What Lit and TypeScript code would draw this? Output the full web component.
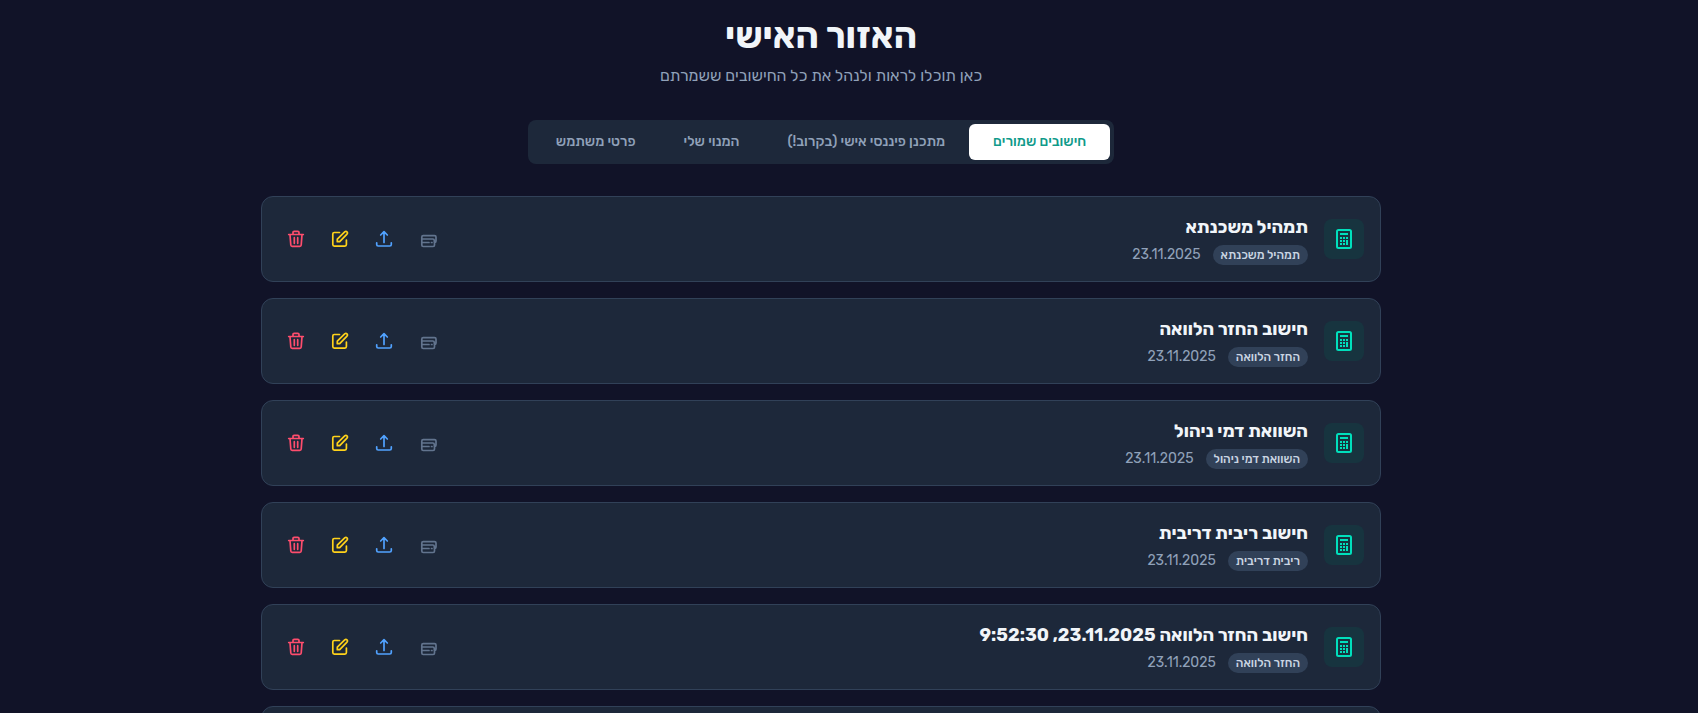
import { LitElement, html, css, svg } from "lit";
import { customElement, property, state } from "lit/decorators.js";

interface SavedCalculation {
  title: string;
  kind: string;
  date: string;
}

const CALCULATIONS: SavedCalculation[] = [
  { title: "תמהיל משכנתא", kind: "תמהיל משכנתא", date: "23.11.2025" },
  { title: "חישוב החזר הלוואה", kind: "החזר הלוואה", date: "23.11.2025" },
  { title: "השוואת דמי ניהול", kind: "השוואת דמי ניהול", date: "23.11.2025" },
  { title: "חישוב ריבית דריבית", kind: "ריבית דריבית", date: "23.11.2025" },
  { title: "חישוב החזר הלוואה 23.11.2025, 9:52:30", kind: "החזר הלוואה", date: "23.11.2025" },
  { title: "תמהיל משכנתא", kind: "תמהיל משכנתא", date: "23.11.2025" },
];

const TABS = ["חישובים שמורים", "מתכנן פיננסי אישי (בקרוב!)", "המנוי שלי", "פרטי משתמש"];

const calculatorIcon = svg`
  <rect x="3" y="1" width="14" height="18" rx="1.5" stroke-width="2"/>
  <path d="M6 5h8" stroke-width="2" stroke-linecap="butt"/>
  <g fill="currentColor" stroke="none">
    <rect x="6" y="8" width="2" height="2"/><rect x="9" y="8" width="2" height="2"/><rect x="12" y="8" width="2" height="2"/>
    <rect x="6" y="11" width="2" height="2"/><rect x="9" y="11" width="2" height="2"/><rect x="12" y="11" width="2" height="5"/>
    <rect x="6" y="14" width="2" height="2"/><rect x="9" y="14" width="2" height="2"/>
  </g>`;

const cardsIcon = svg`
  <path d="M16.500 13.500v2.600q0 1.400-1.400 1.400H5.200q-1.400 0-1.400-1.400V8.100q0-1.400 1.400-1.400h11.300q1.500 0 1.500 1.400v4q0 1.600-1.500 1.600M4 10h10.800q1.500 0 1.500 1.500v1.500M4 13.500h7M13.500 13.500h.5"/>`;

const uploadIcon = svg`
  <path d="M10 13.500V3M6.700 6 10 2.700 13.300 6M2.700 13.800v1.700q0 1.500 1.500 1.500h11.600q1.500 0 1.500-1.500v-1.700"/>`;

const editIcon = svg`
  <path d="M9.500 3.500H4.300q-1.500 0-1.500 1.500v10.600q0 1.500 1.500 1.500h10.600q1.500 0 1.500-1.500V11"/>
  <path d="M7.300 12.700v-2.500l7.400-7.300q1.200-1 2.300 0 1.100 1.200 0 2.300l-7.300 7.500z"/>`;

const trashIcon = svg`
  <path d="M2.700 5.500h14.600M7 5.300V3.600q0-1.200 1.200-1.200h3.600q1.200 0 1.200 1.200v1.700M4 5.700l.8 10.300q.1 1.300 1.400 1.300h7.600q1.300 0 1.400-1.300L16 5.700M8.300 8.700v5.600M11.700 8.700v5.600"/>`;

const icon = (shape: unknown) => html`
  <svg viewBox="0 0 20 20" width="20" height="20" fill="none" stroke="currentColor"
    stroke-width="1.7" stroke-linecap="round" stroke-linejoin="round" aria-hidden="true">${shape}</svg>`;

@customElement("calculation-card")
export class CalculationCard extends LitElement {
  @property({ attribute: false }) item!: SavedCalculation;

  static styles = css`
    :host {
      display: block;
    }
    .card {
      display: flex;
      align-items: center;
      gap: 16px;
      padding: 16px;
      border: 1px solid #314158;
      border-radius: 12px;
      background: #1d283a;
    }
    svg {
      display: block;
    }
    .badge-icon {
      display: grid;
      place-items: center;
      width: 40px;
      height: 40px;
      border-radius: 8px;
      background: #17343f;
      color: #00e0bc;
    }
    .info {
      flex: 1;
      min-width: 0;
    }
    .title {
      margin: 0 0 4px;
      font-size: 18px;
      line-height: 28px;
      font-weight: 700;
      color: #f1f5f9;
    }
    .meta {
      display: flex;
      align-items: center;
      gap: 12px;
      height: 20px;
    }
    .kind {
      padding: 2px 8px;
      border-radius: 10px;
      background: #314158;
      color: #cad5e2;
      font-size: 12px;
      line-height: 16px;
      font-weight: 500;
    }
    .date {
      font-size: 14px;
      line-height: 20px;
      color: #90a1b9;
    }
    .actions {
      display: flex;
      gap: 8px;
    }
    .action {
      padding: 8px;
      border: 0;
      border-radius: 8px;
      background: none;
      cursor: pointer;
    }
    .compare {
      color: #62748e;
    }
    .load {
      color: #51a2ff;
    }
    .edit {
      color: #ffd21a;
    }
    .remove {
      color: #ff4d6d;
    }
  `;

  render() {
    const { title, kind, date } = this.item;
    return html`
      <article class="card">
        <div class="badge-icon">${icon(calculatorIcon)}</div>
        <div class="info">
          <h2 class="title">${title}</h2>
          <div class="meta">
            <span class="kind">${kind}</span>
            <time class="date">${date}</time>
          </div>
        </div>
        <div class="actions">
          <button class="action compare" type="button" aria-label="השוואה">${icon(cardsIcon)}</button>
          <button class="action load" type="button" aria-label="טעינה">${icon(uploadIcon)}</button>
          <button class="action edit" type="button" aria-label="עריכה">${icon(editIcon)}</button>
          <button class="action remove" type="button" aria-label="מחיקה">${icon(trashIcon)}</button>
        </div>
      </article>
    `;
  }
}

@customElement("app-root")
export class AppRoot extends LitElement {
  @state() private active = 0;

  static styles = css`
    :host {
      display: block;
      box-sizing: border-box;
      min-height: 100vh;
      padding-right: 56px;
      background: #111328;
      font-family: Rubik, "Open Sans", sans-serif;
    }
    .page {
      max-width: 1120px;
      margin: 0 auto;
      padding: 16px;
    }
    .header {
      text-align: center;
    }
    .heading {
      margin: 0 0 8px;
      font-size: 36px;
      line-height: 40px;
      font-weight: 700;
      color: #f1f5f9;
    }
    .subtitle {
      margin: 0;
      font-size: 16px;
      line-height: 24px;
      color: #90a1b9;
    }
    .tabs {
      display: flex;
      width: fit-content;
      margin: 32px auto;
      padding: 4px;
      border-radius: 8px;
      background: #1d283a;
    }
    .tab {
      padding: 8px 24px;
      border: 0;
      border-radius: 6px;
      background: none;
      color: #90a1b9;
      font-family: inherit;
      font-size: 14px;
      line-height: 20px;
      font-weight: 500;
      cursor: pointer;
    }
    .tab[aria-selected="true"] {
      background: #ffffff;
      color: #109a8a;
    }
    .list {
      display: grid;
      gap: 16px;
    }
  `;

  render() {
    return html`
      <main class="page" dir="rtl" lang="he">
        <header class="header">
          <h1 class="heading">האזור האישי</h1>
          <p class="subtitle">כאן תוכלו לראות ולנהל את כל החישובים ששמרתם</p>
        </header>
        <div class="tabs" role="tablist">
          ${TABS.map(
            (label, i) => html`<button
              class="tab"
              type="button"
              role="tab"
              aria-selected=${i === this.active ? "true" : "false"}
              @click=${() => (this.active = i)}
            >${label}</button>`
          )}
        </div>
        <section class="list">
          ${CALCULATIONS.map((item) => html`<calculation-card .item=${item}></calculation-card>`)}
        </section>
      </main>
    `;
  }
}
